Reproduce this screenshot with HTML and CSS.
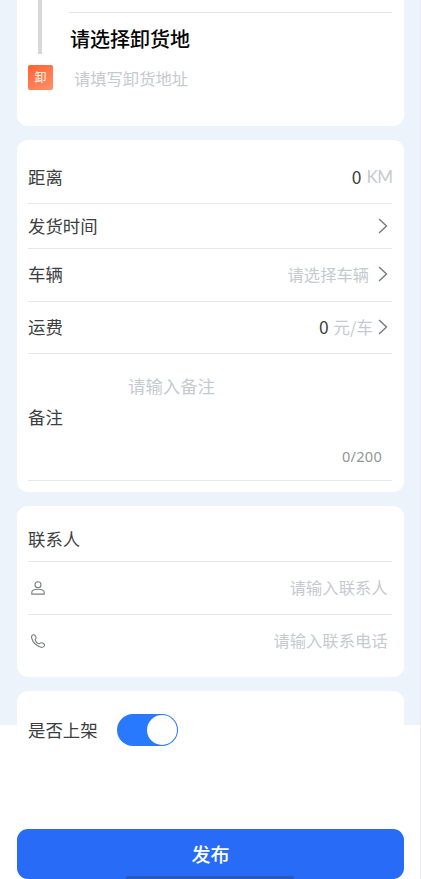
FILE: index.html
```html
<!DOCTYPE html>
<html lang="zh-CN">
<head>
<meta charset="utf-8">
<title>发布货源</title>
<link rel="stylesheet" href="styles.css">
</head>
<body>
<main class="page">
  <section class="card address">
    <div class="rail"><span class="track"></span><span class="badge">卸</span></div>
    <div class="place">
      <h2 class="place-title">请选择卸货地</h2>
      <p class="hint">请填写卸货地址</p>
    </div>
  </section>

  <section class="card details">
    <div class="row row-distance"><span class="label">距离</span><span class="number">0</span><span class="unit">KM</span></div>
    <div class="row row-time"><span class="label">发货时间</span><svg class="arrow" viewBox="0 0 10 16"><path d="M1 1l7.5 7L1 15"/></svg></div>
    <div class="row row-item"><span class="label">车辆</span><span class="hint">请选择车辆</span><svg class="arrow" viewBox="0 0 10 16"><path d="M1 1l7.5 7L1 15"/></svg></div>
    <div class="row row-item row-fee"><span class="label">运费</span><span class="number">0</span><span class="unit">元/车</span><svg class="arrow" viewBox="0 0 10 16"><path d="M1 1l7.5 7L1 15"/></svg></div>
    <div class="row row-note">
      <span class="label">备注</span>
      <div class="note"><span class="note-hint">请输入备注</span><span class="count">0/200</span></div>
    </div>
  </section>

  <section class="card contact">
    <div class="row row-heading"><span class="label">联系人</span></div>
    <div class="row row-item">
      <svg class="icon" viewBox="0 0 14 14"><circle cx="7" cy="3.7" r="3"/><path d="M.8 13.1v-1.7C.8 9.3 3.5 8.3 7 8.3s6.2 1 6.2 3.1v1.7z"/></svg>
      <span class="hint">请输入联系人</span>
    </div>
    <div class="row row-item row-last">
      <svg class="icon" viewBox="0 0 14 14"><path d="M1.2 1.3C2 .5 3.3.5 4 1.3c.7.9 1.2 2.2.9 3.1-.2.7-.9 1-.7 1.700.4 1.3 1.9 2.9 3.4 3.6.8.3 1-.5 1.7-.8 1-.4 2.5.1 3.5.9.9.8.8 1.9.1 2.7-.8.9-2.2 1-3.6.5C5.4 11.6 1.9 8.2.8 4.5.4 3.2.4 2.1 1.2 1.3z"/></svg>
      <span class="hint">请输入联系电话</span>
    </div>
  </section>

  <section class="card listing">
    <span class="label">是否上架</span>
    <span class="switch"><span class="knob"></span></span>
  </section>

  <button class="submit" type="button">发布<span class="home-bar"></span></button>
</main>
</body>
</html>
```
FILE: styles.css
```css
* { box-sizing: border-box; }

body {
  margin: 0;
  background: #fff;
  color: #3c3e3f;
  font: 17.4px/24px "Noto Sans CJK SC", sans-serif;
}

.page {
  display: flex;
  flex-direction: column;
  gap: 14px;
  height: 879px;
  padding: 0 16px 0 17px;
  border-right: 1px solid #ececee;
  background: linear-gradient(#edf3fb 725px, #fff 725px);
  overflow: hidden;
}

.card {
  flex: none;
  padding: 0 12px 0 11px;
  border-radius: 11px;
  background: #fff;
}

.address {
  display: flex;
  height: 126px;
  border-radius: 0 0 11px 11px;
}

.rail {
  display: flex;
  flex-direction: column;
  align-items: center;
  width: 25px;
  margin-right: 16px;
}

.track {
  width: 4px;
  height: 54px;
  margin: 0 1px 11px 0;
  background: #d8d8d8;
}

.badge {
  width: 25px;
  height: 25px;
  border-radius: 2px;
  background: linear-gradient(150deg, #ff622e, #ff916d);
  color: #fff;
  font-size: 12px;
  line-height: 24px;
  text-align: center;
}

.place {
  flex: 1;
  margin-top: 12px;
  border-top: 1px solid #e4e4e5;
}

.place-title {
  margin: 12px 0 0 1px;
  color: #050505;
  font-size: 20px;
  font-weight: 500;
  line-height: 28px;
}

.hint {
  margin: 0;
  color: #c5cad1;
  font-size: 16.3px;
}

.place .hint { margin: 13px 0 0 5px; }

.details { height: 352px; }

.row {
  display: flex;
  align-items: center;
  border-bottom: 1px solid #e6e8ea;
}

.label { margin-right: auto; }

.row-distance { height: 64px; padding-top: 10px; }
.row-time { height: 45px; }
.row-item { height: 52.5px; padding-bottom: 1px; }

.number { margin-right: 5px; }

.unit {
  color: #c5cad1;
  font-size: 16.5px;
}

.row-distance .unit {
  font-family: Lato, sans-serif;
  font-size: 17px;
  letter-spacing: -.5px;
  margin-right: -.5px;
}

.arrow {
  width: 10px;
  height: 16px;
  margin: 0 4px 0 9px;
  fill: none;
  stroke: #77797a;
  stroke-width: 1.4;
}

.row-fee .arrow { margin-left: 5px; }

.row-note { height: 127px; }

.note {
  display: flex;
  flex-direction: column;
  width: 264px;
  height: 100%;
  padding: 20px 10px 0 0;
}

.note-hint { color: #c5cad1; }

.count {
  margin-top: 46px;
  color: #929595;
  font-size: 14.6px;
  font-family: "Noto Sans", sans-serif;
  letter-spacing: .25px;
  text-align: right;
}

.contact { height: 171px; }
.row-heading { height: 56px; padding-top: 11px; }

.icon {
  width: 14px;
  height: 14px;
  margin: 1px auto 0 3px;
  fill: none;
  stroke: #7c7f80;
  stroke-width: 1.1;
}

.contact .hint { margin-right: 4.5px; }
.row-last { border: 0; }

.listing {
  display: flex;
  align-items: center;
  height: 124px;
  padding-bottom: 46px;
}

.listing .label { margin-right: 19.4px; }

.switch {
  display: flex;
  justify-content: flex-end;
  width: 61px;
  height: 32px;
  padding: 1px;
  border-radius: 16px;
  background: #2879fd;
}

.knob {
  width: 30px;
  height: 30px;
  border-radius: 50%;
  background: #fff;
}

.submit {
  position: relative;
  flex: none;
  height: 50px;
  padding: 0;
  border: 0;
  border-radius: 11px;
  background: #286bf6;
  color: #fff;
  font: 500 19px/50px "Noto Sans CJK SC", sans-serif;
}

.home-bar {
  position: absolute;
  bottom: 0;
  left: 109px;
  width: 168px;
  height: 3px;
  border-radius: 2px 2px 0 0;
  background: #2859bd;
}
```
